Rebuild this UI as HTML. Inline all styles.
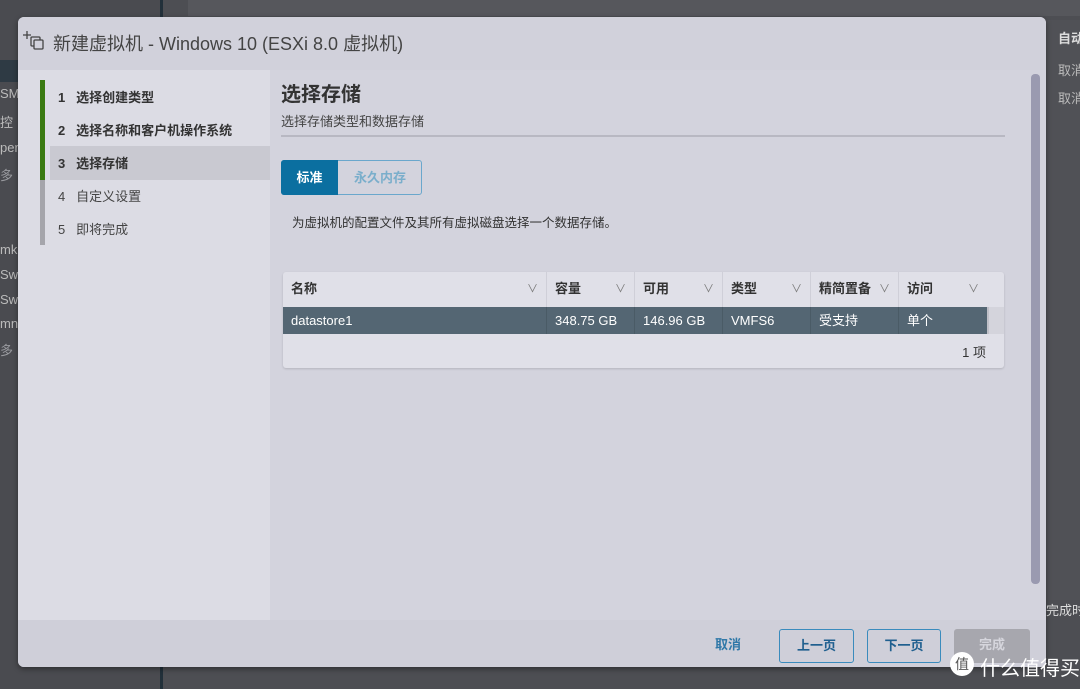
<!DOCTYPE html>
<html><head><meta charset="utf-8"><style>
*{box-sizing:border-box;margin:0;padding:0}
body{width:1080px;height:689px;overflow:hidden;background:#4d4e53;font-family:"Liberation Sans","Noto Sans CJK SC",sans-serif;position:relative}
.abs{position:absolute;white-space:nowrap}
.bgt{color:#9a9ba0;font-size:13px}
#dlg{left:18px;top:17px;width:1028px;height:650px;background:#d3d3dd;border-radius:6px;overflow:hidden;box-shadow:0 2px 6px rgba(0,0,0,.4)}
.nav{font-size:13px;color:#333;position:absolute;left:40px}
.th{position:absolute;top:0;height:35px;line-height:34px;font-size:13px;font-weight:bold;color:#333;padding-left:8px;border-right:1px solid #cfcfd8}
.td{position:absolute;top:0;height:27px;line-height:27px;font-size:13px;color:#fff;padding-left:8px;border-right:1px solid #4a5b66}
.chev{position:absolute;right:8px;top:0;color:#777;font-weight:normal;font-size:11px}
.btn{position:absolute;top:612px;height:34px;line-height:32px;text-align:center;font-size:13px;font-weight:bold;border-radius:3px}
</style></head><body>
<div class="abs" style="left:0;top:0;width:160px;height:689px;background:#4a4b50"></div>
<div class="abs" style="left:160px;top:0;width:3px;height:689px;background:#22303a"></div>
<div class="abs" style="left:188px;top:0;width:892px;height:16px;background:#56575c"></div>
<div class="abs bgt" style="left:0;top:60px;width:20px;height:22px;background:#2e3a44"></div>
<div class="abs bgt" style="left:0;top:86px;color:#bbb">SM</div>
<div class="abs bgt" style="left:0;top:112px;color:#bbb">控</div>
<div class="abs bgt" style="left:0;top:140px;color:#bbb">per</div>
<div class="abs bgt" style="left:0;top:165px">多</div>
<div class="abs bgt" style="left:0;top:242px;color:#bbb">mk</div>
<div class="abs bgt" style="left:0;top:267px;color:#bbb">Swi</div>
<div class="abs bgt" style="left:0;top:292px;color:#bbb">Swi</div>
<div class="abs bgt" style="left:0;top:316px;color:#bbb">mni</div>
<div class="abs bgt" style="left:0;top:340px">多</div>
<div class="abs" style="left:1046px;top:20px;width:34px;height:580px;background:#505156;overflow:hidden">
<div class="abs bgt" style="left:12px;top:8px;color:#ddd;font-weight:bold">自动</div>
<div class="abs bgt" style="left:12px;top:40px;color:#bbb">取消</div>
<div class="abs bgt" style="left:12px;top:68px;color:#bbb">取消</div>
</div>
<div class="abs" style="left:1046px;top:590px;width:34px;height:40px;overflow:hidden"><div class="abs bgt" style="left:0;top:10px;color:#ddd">完成时</div></div>

<div id="dlg" class="abs">
  <div class="abs" style="left:0;top:0;width:1028px;height:53px;background:#d1d1db"></div>
  <svg class="abs" style="left:4px;top:12px" width="24" height="22" viewBox="0 0 24 22" fill="none" stroke="#444" stroke-width="1.3"><path d="M1 6h8M5 2v8"/><rect x="9" y="8" width="9" height="9" rx="1"/><rect x="12" y="11" width="9" height="9" rx="1" fill="#d1d1db"/></svg>
  <div class="abs" style="left:35px;top:13px;font-size:18px;color:#444">新建虚拟机 - Windows 10 (ESXi 8.0 虚拟机)</div>
  <div class="abs" style="left:0;top:53px;width:252px;height:550px;background:#dcdce4"></div>
  <div class="abs" style="left:22px;top:63px;width:5px;height:100px;background:#3a7a12"></div>
  <div class="abs" style="left:22px;top:163px;width:5px;height:65px;background:#a5a5ab"></div>
  <div class="abs" style="left:32px;top:129px;width:220px;height:34px;background:#c9c9d1"></div>
  <div class="nav" style="top:70px;font-weight:bold">1&nbsp;&nbsp;&nbsp;选择创建类型</div>
  <div class="nav" style="top:103px;font-weight:bold">2&nbsp;&nbsp;&nbsp;选择名称和客户机操作系统</div>
  <div class="nav" style="top:136px;font-weight:bold">3&nbsp;&nbsp;&nbsp;选择存储</div>
  <div class="nav" style="top:169px;color:#444">4&nbsp;&nbsp;&nbsp;自定义设置</div>
  <div class="nav" style="top:202px;color:#444">5&nbsp;&nbsp;&nbsp;即将完成</div>
  <div class="abs" style="left:263px;top:61px;font-size:20px;font-weight:bold;color:#333">选择存储</div>
  <div class="abs" style="left:263px;top:94px;font-size:13px;color:#444">选择存储类型和数据存储</div>
  <div class="abs" style="left:263px;top:118px;width:724px;height:2px;background:#b8b8c2"></div>
  <div class="abs" style="left:263px;top:143px;width:141px;height:35px;border:1px solid #6aa7cc;border-radius:3px"></div>
  <div class="abs" style="left:263px;top:143px;width:57px;height:35px;background:#0b6fa0;border-radius:3px 0 0 3px;color:#fff;font-size:13px;font-weight:bold;line-height:35px;text-align:center">标准</div>
  <div class="abs" style="left:320px;top:143px;width:84px;height:35px;color:#7aaecb;font-size:13px;font-weight:bold;line-height:35px;text-align:center">永久内存</div>
  <div class="abs" style="left:274px;top:195px;font-size:12.5px;color:#333">为虚拟机的配置文件及其所有虚拟磁盘选择一个数据存储。</div>
  <div class="abs" style="left:265px;top:255px;width:721px;height:96px;background:#e0e0e8;border-radius:3px;box-shadow:0 1px 2px rgba(0,0,0,.15)">
    <div class="abs" style="left:0;top:0;width:721px;height:35px">
      <div class="th" style="left:0;width:264px">名称<span class="chev">∨</span></div>
      <div class="th" style="left:264px;width:88px">容量<span class="chev">∨</span></div>
      <div class="th" style="left:352px;width:88px">可用<span class="chev">∨</span></div>
      <div class="th" style="left:440px;width:88px">类型<span class="chev">∨</span></div>
      <div class="th" style="left:528px;width:88px">精简置备<span class="chev">∨</span></div>
      <div class="th" style="left:616px;width:88px;border:none">访问<span class="chev">∨</span></div>
    </div>
    <div class="abs" style="left:0;top:35px;width:704px;height:27px;background:#546673">
      <div class="td" style="left:0;width:264px">datastore1</div>
      <div class="td" style="left:264px;width:88px">348.75 GB</div>
      <div class="td" style="left:352px;width:88px">146.96 GB</div>
      <div class="td" style="left:440px;width:88px">VMFS6</div>
      <div class="td" style="left:528px;width:88px">受支持</div>
      <div class="td" style="left:616px;width:88px;border:none">单个</div>
    </div>
    <div class="abs" style="left:704px;top:35px;width:17px;height:27px;background:#d4d4dc;border-left:2px solid #c0c0c8"></div>
    <div class="abs" style="right:18px;top:70px;font-size:13px;color:#333">1 项</div>
  </div>
  <div class="abs" style="left:1013px;top:57px;width:9px;height:510px;background:#9a9ab0;border-radius:4px"></div>
  <div class="abs" style="left:0;top:603px;width:1028px;height:47px;background:#cfcfd9"></div>
  <div class="btn" style="left:680px;width:60px;color:#2f78a8;border:none">取消</div>
  <div class="btn" style="left:761px;width:75px;color:#1f5f8f;border:1px solid #3a8bbd">上一页</div>
  <div class="btn" style="left:849px;width:74px;color:#1f5f8f;border:1px solid #3a8bbd">下一页</div>
  <div class="btn" style="left:936px;width:76px;color:#d5d5dc;background:#a7a7ae">完成</div>
</div>
<svg class="abs" style="left:949px;top:651px" width="26" height="26" viewBox="0 0 26 26"><circle cx="13" cy="13" r="12" fill="#fff"/><text x="13" y="18" font-size="14" text-anchor="middle" fill="#555" font-family="Noto Sans CJK SC">值</text></svg>
<div class="abs" style="left:980px;top:652px;font-size:20px;color:#fff;font-family:'Noto Sans CJK SC',sans-serif">什么值得买</div>
</body></html>
